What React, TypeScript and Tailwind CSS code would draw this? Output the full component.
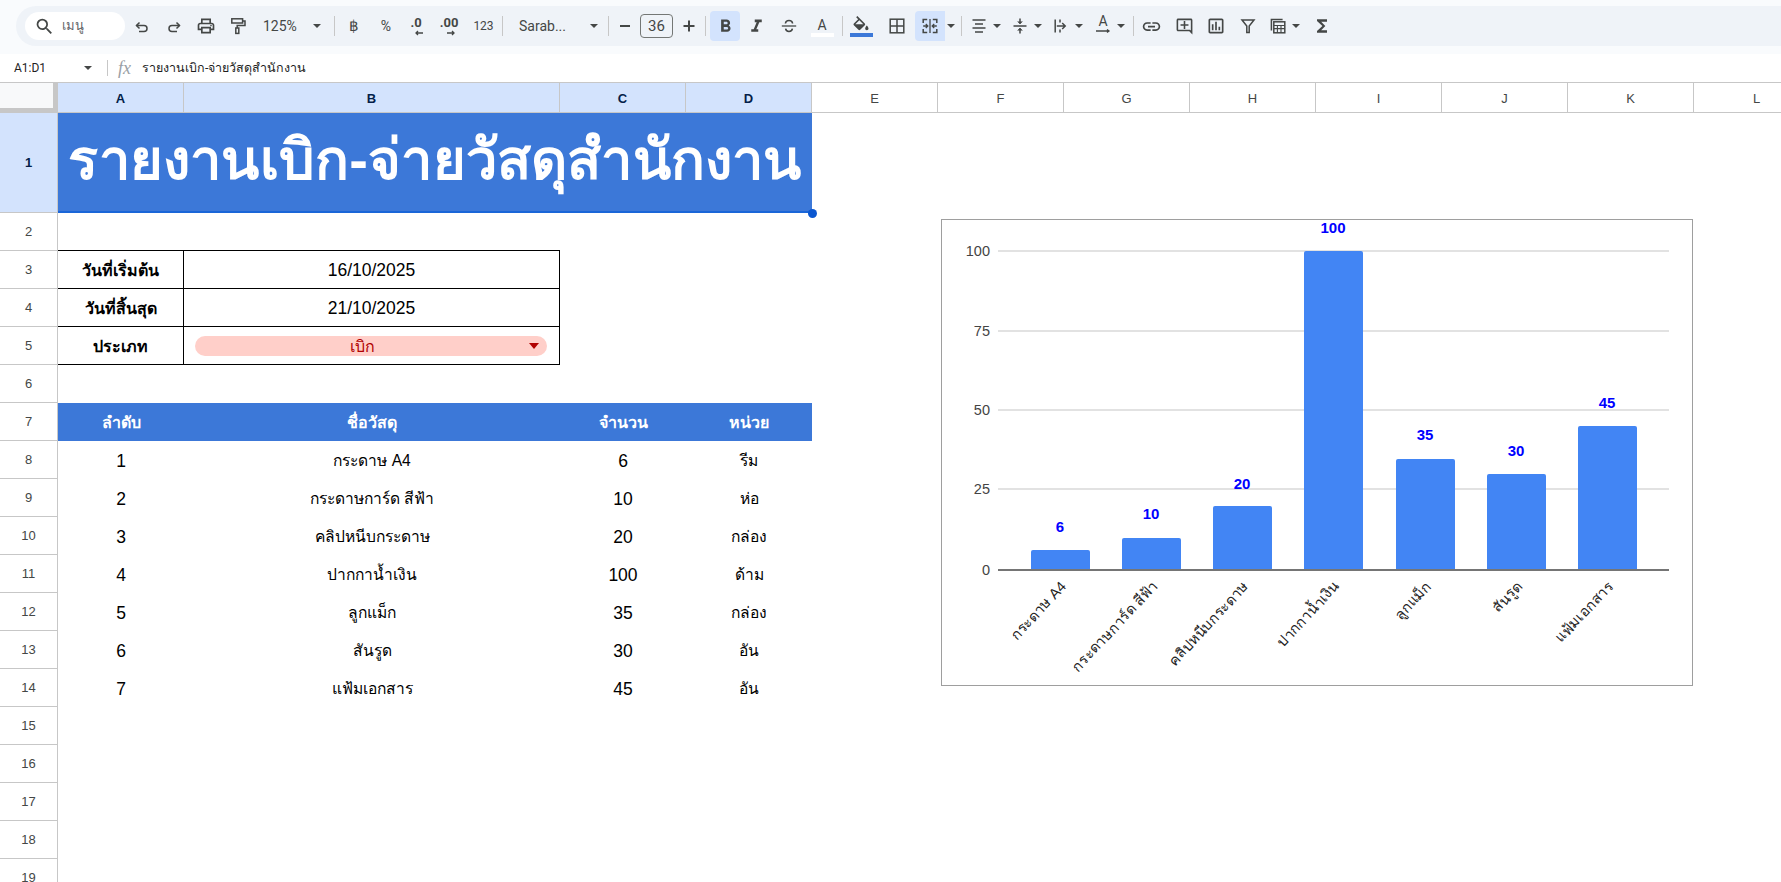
import { ReactNode } from "react";
import {
  MdFormatBold,
  MdFormatItalic,
  MdFunctions,
  MdLink,
  MdOutlineAddComment,
  MdOutlineInsertChart,
  MdOutlinePrint,
  MdSearch,
} from "react-icons/md";

const columns = ["E", "F", "G", "H", "I", "J", "K", "L"];

const rows = [
  ["1", "กระดาษ A4", "6", "รีม"],
  ["2", "กระดาษการ์ด สีฟ้า", "10", "ห่อ"],
  ["3", "คลิปหนีบกระดาษ", "20", "กล่อง"],
  ["4", "ปากกาน้ำเงิน", "100", "ด้าม"],
  ["5", "ลูกแม็ก", "35", "กล่อง"],
  ["6", "สันรูด", "30", "อัน"],
  ["7", "แฟ้มเอกสาร", "45", "อัน"],
];

const bars = [
  { label: "กระดาษ A4", value: 6, x: 1031, top: 550, labelY: 532 },
  { label: "กระดาษการ์ด สีฟ้า", value: 10, x: 1122, top: 538, labelY: 519 },
  { label: "คลิปหนีบกระดาษ", value: 20, x: 1213, top: 506, labelY: 489 },
  { label: "ปากกาน้ำเงิน", value: 100, x: 1304, top: 251, labelY: 233 },
  { label: "ลูกแม็ก", value: 35, x: 1396, top: 459, labelY: 440 },
  { label: "สันรูด", value: 30, x: 1487, top: 474, labelY: 456 },
  { label: "แฟ้มเอกสาร", value: 45, x: 1578, top: 426, labelY: 408 },
];

function Caret({ className = "w-3" }: { className?: string }) {
  return (
    <span className={`flex shrink-0 justify-center ${className}`}>
      <span className="h-0 w-0 border-x-[4px] border-t-[4px] border-x-transparent border-t-[#444746]" />
    </span>
  );
}

function Sep({ className = "" }: { className?: string }) {
  return <span className={`h-5 w-px shrink-0 bg-[#c7c7c7] ${className}`} />;
}

function Tool({ className, children }: { className: string; children: ReactNode }) {
  return <span className={`flex h-[30px] shrink-0 items-center justify-center text-[#444746] ${className}`}>{children}</span>;
}

function Glyph({ children, className = "" }: { children: ReactNode; className?: string }) {
  return (
    <svg viewBox="0 0 18 18" className={`h-[18px] w-[18px] ${className}`} fill="none" stroke="currentColor" strokeWidth="1.5">
      {children}
    </svg>
  );
}

function Toolbar() {
  return (
    <div className="h-[54px] bg-[#f9fbfd] pt-[6px] pl-4">
      <div className="flex h-10 items-center rounded-l-[20px] bg-[#eff3f8] pl-[9px] font-['Roboto',sans-serif]">
        <div className="flex h-7 w-[100px] shrink-0 items-center rounded-full bg-white pl-[9px] text-[#444746]">
          <MdSearch className="h-[21px] w-[21px]" />
          <span className="ml-[7px] text-[13px] text-[#5f6368]">เมนู</span>
        </div>
        <span className="w-px shrink-0" />
        <Tool className="w-8">
          <Glyph>
            <path d="M6.5 5.5 3.5 8.5l3 3" />
            <path d="M3.5 8.5H11a3 3 0 0 1 0 6H6" />
          </Glyph>
        </Tool>
        <Tool className="w-8">
          <Glyph>
            <path d="M11.5 5.5l3 3-3 3" />
            <path d="M14.5 8.5H7a3 3 0 0 0 0 6h5" />
          </Glyph>
        </Tool>
        <Tool className="w-8">
          <MdOutlinePrint className="h-5 w-5" />
        </Tool>
        <Tool className="w-8">
          <Glyph>
            <rect x="2.8" y="1.8" width="10.8" height="4.2" />
            <path d="M13.6 4H16v4.4H8.2v2.6" />
            <rect x="6.8" y="11" width="3" height="5.4" />
          </Glyph>
        </Tool>
        <Tool className="w-[72px] justify-start pl-[9px] text-[14px]">
          <span className="w-[50px]">125%</span>
          <Caret className="w-[8px]" />
        </Tool>
        <Sep className="ml-2" />
        <Tool className="w-[38px] font-['Liberation_Sans',sans-serif] text-[15px]">฿</Tool>
        <Tool className="w-[26px] text-[14px]">%</Tool>
        <Tool className="relative w-[34px] text-[13px] font-bold">
          <span className="-mt-[6px]">.0</span>
          <svg viewBox="0 0 10 6" className="absolute top-[19px] left-[15px] h-[6px] w-[10px]" fill="none" stroke="currentColor" strokeWidth="1.3">
            <path d="M9 3H2M4 1 2 3l2 2" />
          </svg>
        </Tool>
        <Tool className="relative w-[32px] text-[13px] font-bold">
          <span className="-mt-[6px]">.00</span>
          <svg viewBox="0 0 10 6" className="absolute top-[19px] left-[13px] h-[6px] w-[10px]" fill="none" stroke="currentColor" strokeWidth="1.3">
            <path d="M1 3h7M6 1l2 2-2 2" />
          </svg>
        </Tool>
        <Tool className="w-[37px] text-[12px]">123</Tool>
        <Sep />
        <Tool className="w-[105px] justify-start pl-4 text-[14px]">
          <span className="w-[71px]">Sarab...</span>
          <Caret className="w-[8px]" />
        </Tool>
        <Sep />
        <Tool className="w-[31px]">
          <span className="h-[2px] w-[10px] bg-[#444746]" />
        </Tool>
        <span className="flex h-6 w-[33px] shrink-0 items-center justify-center rounded-[4px] border border-[#747775] text-[15px] text-[#444746]">
          36
        </span>
        <Tool className="w-8">
          <Glyph className="h-[16px] w-[16px]">
            <path d="M9 3.5v11M3.5 9h11" strokeWidth="2" />
          </Glyph>
        </Tool>
        <Sep />
        <Tool className="ml-1 w-[30px] rounded-[4px] bg-[#d3e3fd] text-[#041e49]">
          <MdFormatBold className="h-[21px] w-[21px]" />
        </Tool>
        <Tool className="w-8">
          <MdFormatItalic className="h-[21px] w-[21px]" />
        </Tool>
        <Tool className="w-[34px]">
          <Glyph>
            <path d="M1.8 9h14.4" strokeWidth="1.3" />
            <path d="M5.4 6.5C5.6 4.6 7 3.6 9 3.6s3.4 1 3.6 2.9M5.6 11.6c.2 1.8 1.5 2.8 3.4 2.8s3.2-1 3.4-2.8" />
          </Glyph>
        </Tool>
        <Tool className="w-8 flex-col">
          <span className="-mb-px text-[14px] leading-[18px]">A</span>
          <span className="h-1 w-[23px] bg-white" />
        </Tool>
        <Sep className="ml-1" />
        <Tool className="w-9 flex-col">
          <svg viewBox="0 0 24 18" className="h-[15px] w-5" fill="currentColor">
            <path d="M16.56 8.94 7.62 0 6.21 1.41l2.38 2.38-5.15 5.15c-.59.59-.59 1.54 0 2.12l5.5 5.5c.29.29.68.44 1.06.44s.77-.15 1.06-.44l5.5-5.5c.59-.58.59-1.53 0-2.12zM5.21 10 10 5.21 14.79 10H5.21zM19 11.5s-2 2.17-2 3.5c0 1.1.9 2 2 2s2-.9 2-2c0-1.33-2-3.5-2-3.5z" />
          </svg>
          <span className="mt-[2px] h-1 w-[23px] bg-[#3c78d8]" />
        </Tool>
        <Tool className="w-9">
          <Glyph>
            <rect x="2.2" y="2.2" width="13.6" height="13.6" />
            <path d="M9 2.2v13.6M2.2 9h13.6" />
          </Glyph>
        </Tool>
        <Tool className="w-[30px] rounded-l-[4px] bg-[#d3e3fd] text-[#041e49]">
          <Glyph>
            <path d="M2.2 6V2.5h4M11.8 2.5h4V6M2.2 12v3.5h4M11.8 15.5h4V12" />
            <path d="M2.2 9h4.3M4.8 7l2 2-2 2M15.8 9h-4.3M13.2 7l-2 2 2 2M9 2v14" strokeWidth="1.3" />
          </Glyph>
        </Tool>
        <Tool className="w-3">
          <Caret />
        </Tool>
        <Sep className="ml-1" />
        <Tool className="ml-[5px] w-6">
          <Glyph>
            <path d="M2.5 3h13M5 7h8M2.5 11h13M5 15h8" />
          </Glyph>
        </Tool>
        <Caret />
        <Tool className="ml-[5px] w-6">
          <Glyph>
            <path d="M2.5 9h13M9 1.5v5M9 11.5v5" />
            <path d="M6.8 4.5 9 6.8l2.2-2.3M6.8 13.5 9 11.2l2.2 2.3" fill="currentColor" strokeWidth="1" />
          </Glyph>
        </Tool>
        <Caret />
        <Tool className="ml-[5px] w-6">
          <Glyph>
            <path d="M3.2 2.5v13M8 2.5v3M8 12.5v3M4.8 9H13M10.2 6l3 3-3 3" />
          </Glyph>
        </Tool>
        <Caret />
        <Tool className="relative ml-[6px] w-6 flex-col">
          <span className="-mt-1 text-[14px] leading-[15px]">A</span>
          <svg viewBox="0 0 18 6" className="h-[6px] w-[18px]" fill="none" stroke="currentColor" strokeWidth="1.3">
            <path d="M2 2h13M13 .5 15 2l-2 1.5" />
          </svg>
        </Tool>
        <Caret />
        <Sep className="ml-[6px]" />
        <Tool className="w-[34px]">
          <MdLink className="h-[21px] w-[21px]" />
        </Tool>
        <Tool className="w-8">
          <MdOutlineAddComment className="h-[19px] w-[19px]" />
        </Tool>
        <Tool className="w-8">
          <MdOutlineInsertChart className="h-[20px] w-[20px]" />
        </Tool>
        <Tool className="w-8">
          <Glyph>
            <path d="M3 3h12l-4.8 6v6.5H7.8V9z" />
          </Glyph>
        </Tool>
        <Tool className="ml-[2px] w-6">
          <Glyph>
            <path d="M2.4 13.5V2.4h11.2" />
            <rect x="4.8" y="4.8" width="11" height="11" />
            <path d="M4.8 8.5h11M4.8 11.6h11M8.4 8.5v7.3M12 8.5v7.3" strokeWidth="1.1" />
          </Glyph>
        </Tool>
        <Caret />
        <Tool className="w-10">
          <MdFunctions className="h-[20px] w-[20px]" />
        </Tool>
      </div>
    </div>
  );
}

function FormulaBar() {
  return (
    <div className="flex h-7 items-center font-['Roboto',sans-serif] text-[12.5px] text-[#1f1f1f]">
      <span className="w-[84px] pl-[14px] text-[12px]">A1:D1</span>
      <Caret className="w-[8px]" />
      <span className="ml-[15px] h-[16px] w-px bg-[#c7c7c7]" />
      <span className="ml-[10px] w-[24px] font-['Liberation_Serif',serif] text-[18px] text-[#9aa0a6] italic">fx</span>
      <span>รายงานเบิก-จ่ายวัสดุสำนักงาน</span>
    </div>
  );
}

function ColHead({ name, selected, className }: { name: string; selected?: boolean; className: string }) {
  return (
    <div
      className={`flex shrink-0 items-center justify-center border-r border-[#c7c7c7] pt-[2px] text-[13px] ${className} ${
        selected ? "bg-[#d3e3fd] font-bold text-[#041e49]" : "text-[#444746]"
      }`}
    >
      {name}
    </div>
  );
}

function RowHead({ n, selected }: { n: number; selected?: boolean }) {
  return (
    <div
      className={`flex w-[58px] shrink-0 items-center justify-center border-r border-b border-[#c7c7c7] text-[13px] ${
        selected ? "bg-[#d3e3fd] font-bold text-[#041e49]" : "bg-white text-[#444746]"
      }`}
    >
      {n}
    </div>
  );
}

function Row({ n, children }: { n: number; children?: ReactNode }) {
  return (
    <div className="flex h-[38px] font-['Liberation_Sans',sans-serif]">
      <RowHead n={n} />
      {children}
    </div>
  );
}

function Cell({ className, children }: { className: string; children?: ReactNode }) {
  return <div className={`flex shrink-0 items-center justify-center pt-[2px] text-black ${className}`}>{children}</div>;
}

function Chart() {
  return (
    <div className="absolute top-[219px] left-[941px] h-[467px] w-[752px] border border-[#9e9e9e] bg-white">
      <svg viewBox="942 220 750 465" className="h-full w-full font-['Liberation_Sans',sans-serif]">
        {[
          { y: 251, t: "100" },
          { y: 331, t: "75" },
          { y: 410, t: "50" },
          { y: 489, t: "25" },
        ].map((g) => (
          <line key={g.t} x1="998" x2="1669" y1={g.y} y2={g.y} stroke="#d9d9d9" strokeWidth="1.6" />
        ))}
        {[
          { y: 251, t: "100" },
          { y: 331, t: "75" },
          { y: 410, t: "50" },
          { y: 489, t: "25" },
          { y: 570, t: "0" },
        ].map((g) => (
          <text key={g.t} x="990" y={g.y + 5} textAnchor="end" fontSize="14.5" fill="#444444">
            {g.t}
          </text>
        ))}
        {bars.map((b) => (
          <g key={b.label}>
            <path d={`M${b.x} 569v-${567 - b.top}q0-2 2-2h55q2 0 2 2v${567 - b.top}z`} fill="#4285f4" />
            <text x={b.x + 29} y={b.labelY} textAnchor="middle" fontSize="15" fontWeight="700" fill="#0000ff">
              {b.value}
            </text>
            <text
              x={b.x + 36}
              y={587}
              textAnchor="end"
              fontSize="14.5"
              fill="#222222"
              transform={`rotate(-47 ${b.x + 36} 587)`}
            >
              {b.label}
            </text>
          </g>
        ))}
        <line x1="998" x2="1669" y1="570" y2="570" stroke="#757575" strokeWidth="2" />
      </svg>
    </div>
  );
}

export default function App() {
  return (
    <div className="relative h-[882px] w-[1781px] overflow-hidden bg-white font-['Liberation_Sans',sans-serif]">
      <Toolbar />
      <FormulaBar />

      <div className="flex h-[31px] border-y border-[#c7c7c7] font-['Liberation_Sans',sans-serif]">
        <div className="w-[58px] shrink-0 border-r-[5px] border-b-[4px] border-[#c7c7c7] bg-[#f8f9fa]" />
        <ColHead name="A" selected className="w-[126px]" />
        <ColHead name="B" selected className="w-[376px]" />
        <ColHead name="C" selected className="w-[126px]" />
        <ColHead name="D" selected className="w-[126px]" />
        {columns.map((c) => (
          <ColHead key={c} name={c} className="w-[126px]" />
        ))}
      </div>

      <div className="relative flex h-[100px]">
        <RowHead n={1} selected />
        <div className="flex w-[754px] items-center justify-center border-b-2 border-[#1a66d8] bg-[#3c78d8] pb-1 text-[56px] font-bold tracking-[0.2px] text-white">
          รายงานเบิก-จ่ายวัสดุสำนักงาน
        </div>
        <span className="absolute top-[96px] left-[808px] h-[9px] w-[9px] rounded-full bg-[#0b57d0]" />
      </div>

      <Row n={2}>
        <div className="w-[502px] border-b border-black" />
      </Row>
      <Row n={3}>
        <Cell className="w-[126px] border-r border-b border-black text-[16px] font-bold">วันที่เริ่มต้น</Cell>
        <Cell className="w-[376px] border-r border-b border-black text-[17.5px]">16/10/2025</Cell>
      </Row>
      <Row n={4}>
        <Cell className="w-[126px] border-r border-b border-black text-[16px] font-bold">วันที่สิ้นสุด</Cell>
        <Cell className="w-[376px] border-r border-b border-black text-[17.5px]">21/10/2025</Cell>
      </Row>
      <Row n={5}>
        <Cell className="w-[126px] border-r border-b border-black text-[16px] font-bold">ประเภท</Cell>
        <div className="flex w-[376px] shrink-0 items-center justify-center border-r border-b border-black pr-px text-[16px]">
          <div className="relative flex h-5 w-[352px] items-center justify-center rounded-full bg-[#ffcfc9] pt-[2px] pr-[18px] text-[#b10202]">
            เบิก
            <span className="absolute top-[7px] right-[8px] h-0 w-0 border-x-[5px] border-t-[6px] border-x-transparent border-t-[#b10202]" />
          </div>
        </div>
      </Row>
      <Row n={6} />
      <Row n={7}>
        <div className="flex w-[754px] bg-[#3c78d8] pt-[2px] text-[16px] font-bold text-white">
          <span className="flex w-[126px] items-center justify-center">ลำดับ</span>
          <span className="flex w-[376px] items-center justify-center">ชื่อวัสดุ</span>
          <span className="flex w-[126px] items-center justify-center">จำนวน</span>
          <span className="flex w-[126px] items-center justify-center">หน่วย</span>
        </div>
      </Row>
      {rows.map((r, i) => (
        <Row key={r[0]} n={i + 8}>
          <Cell className="w-[126px] text-[17.5px]">{r[0]}</Cell>
          <Cell className="w-[376px] text-[15.6px]">{r[1]}</Cell>
          <Cell className="w-[126px] text-[17.5px]">{r[2]}</Cell>
          <Cell className="w-[126px] text-[15.6px]">{r[3]}</Cell>
        </Row>
      ))}
      {[15, 16, 17, 18, 19].map((n) => (
        <Row key={n} n={n} />
      ))}

      <Chart />
    </div>
  );
}
